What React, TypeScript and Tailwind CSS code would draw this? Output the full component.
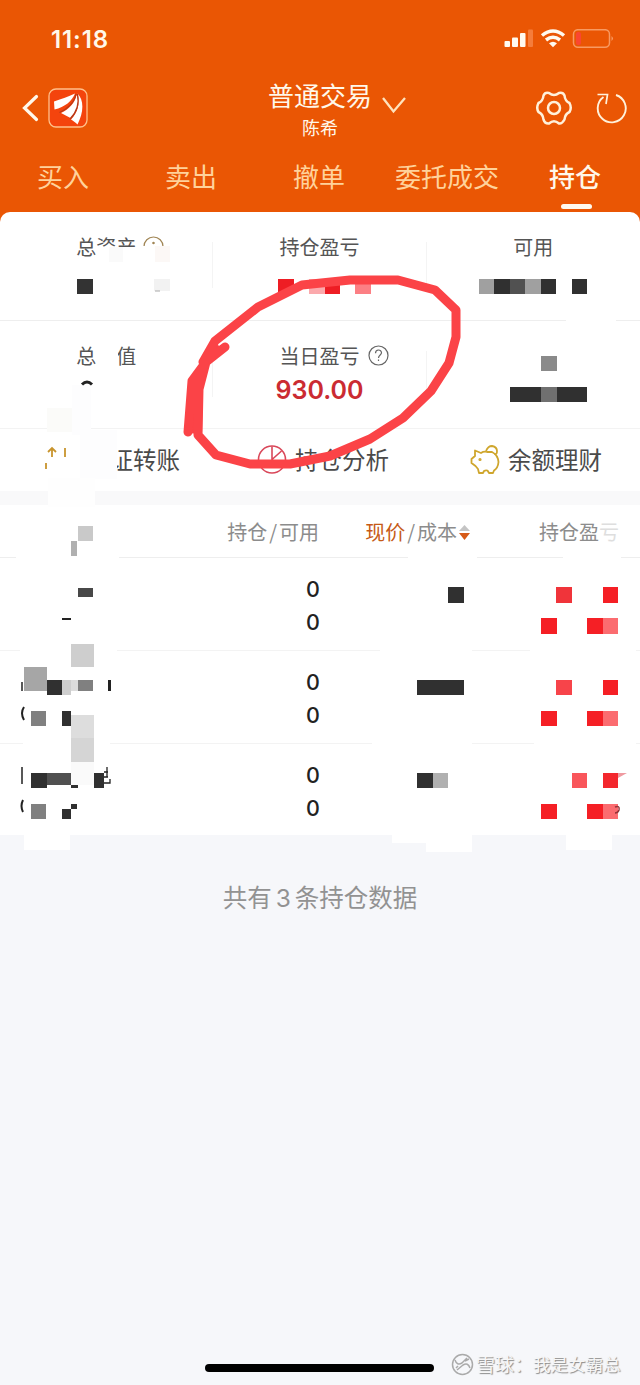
import clsx from 'clsx'

type Block = [number, number, number, number, string]

const tabs = ['买入', '卖出', '撤单', '委托成交', '持仓']

// x, y, width, height, colour
const masks: Block[] = [
  [97, 247, 45, 22, '#ffffff'],
  [142, 246, 28, 50, '#ffffff'],
  [96, 340, 22, 32, '#ffffff'],
  [47, 408, 25, 24, '#fbfbf9'],
  [72, 385, 19, 50, '#fdfdfe'],
  [80, 430, 37, 49, '#fdfdfe'],
  [48, 478, 47, 29, '#fefefe'],
  [566, 316, 50, 8, '#ffffff'],
  [16, 555, 103, 6, '#ffffff'],
  [20, 648, 97, 6, '#ffffff'],
  [23, 740, 87, 6, '#ffffff'],
  [408, 555, 69, 6, '#ffffff'],
  [380, 648, 92, 6, '#ffffff'],
  [372, 740, 100, 6, '#ffffff'],
  [563, 555, 58, 6, '#ffffff'],
  [530, 648, 106, 6, '#ffffff'],
  [534, 740, 102, 6, '#ffffff'],
  [24, 830, 46, 20, '#ffffff'],
  [392, 830, 34, 13, '#ffffff'],
  [426, 830, 46, 22, '#ffffff'],
  [566, 830, 46, 20, '#ffffff'],
]

const mosaic: Block[] = [
  [109, 247, 14, 15, '#fafafa'],
  [155, 246, 15, 16, '#fcf8f6'],
  [77, 279, 16, 15, '#333333'],
  [154, 279, 16, 12, '#f2f2f2'],
  [278, 279, 16, 15, '#ee1d24'],
  [309, 279, 16, 15, '#fba9ac'],
  [325, 279, 15, 15, '#ee1d24'],
  [355, 279, 16, 15, '#fc7f84'],
  [479, 279, 15, 15, '#a0a0a0'],
  [494, 279, 16, 15, '#303030'],
  [510, 279, 15, 15, '#515151'],
  [525, 279, 16, 15, '#a0a0a0'],
  [541, 279, 15, 15, '#303030'],
  [572, 279, 15, 15, '#303030'],
  [541, 356, 16, 15, '#8a8a8a'],
  [510, 387, 31, 15, '#303030'],
  [541, 387, 16, 15, '#707070'],
  [557, 387, 30, 15, '#303030'],
  // name column
  [78, 526, 15, 15, '#c9c9c9'],
  [71, 541, 6, 15, '#b0b0b0'],
  [78, 588, 15, 9, '#484848'],
  [62, 618, 9, 2, '#222222'],
  [71, 644, 23, 23, '#cecece'],
  [24, 667, 23, 24, '#a6a6a6'],
  [47, 680, 15, 15, '#303030'],
  [62, 680, 9, 15, '#cecece'],
  [71, 680, 7, 11, '#dcdcdc'],
  [78, 680, 15, 11, '#808080'],
  [108, 680, 3, 11, '#222222'],
  [31, 711, 15, 15, '#808080'],
  [62, 711, 9, 15, '#303030'],
  [71, 715, 23, 23, '#dddddd'],
  [71, 738, 23, 24, '#d5d5d5'],
  [31, 773, 16, 15, '#303030'],
  [47, 773, 24, 12, '#505050'],
  [71, 762, 23, 23, '#fafafa'],
  [71, 785, 7, 3, '#303030'],
  [94, 773, 10, 15, '#303030'],
  [31, 804, 15, 15, '#808080'],
  [62, 809, 9, 10, '#303030'],
  [71, 804, 6, 5, '#303030'],
  // price column
  [448, 587, 16, 16, '#303030'],
  [417, 680, 47, 15, '#303030'],
  [417, 773, 16, 15, '#303030'],
  [433, 773, 15, 15, '#b0b0b0'],
  // profit column
  [556, 587, 16, 16, '#f0343a'],
  [603, 587, 15, 16, '#f51f25'],
  [541, 618, 16, 16, '#f51f25'],
  [587, 618, 16, 16, '#f51f25'],
  [603, 618, 15, 16, '#fb6c70'],
  [556, 680, 16, 15, '#f7444a'],
  [603, 680, 15, 15, '#f51f25'],
  [541, 711, 16, 15, '#f51f25'],
  [587, 711, 16, 15, '#f51f25'],
  [603, 711, 15, 15, '#fb6c70'],
  [572, 773, 15, 15, '#f9565b'],
  [603, 773, 15, 15, '#f3272d'],
  [541, 804, 16, 15, '#f51f25'],
  [587, 804, 16, 15, '#f51f25'],
  [603, 804, 15, 15, '#fb6c70'],
]

function StatusBar() {
  return (
    <div className="flex h-[72px] items-center justify-between pl-[51px] pr-[26px] pt-[5px]">
      <span className="font-['Inter',sans-serif] text-[24px] font-semibold leading-none tracking-[0.900px] pt-[2px]">11:18</span>
      <svg width="110" height="20" viewBox="504 29 110 20" fill="#fffaf0">
        <rect x="504.500" y="41" width="5.500" height="6" rx="1" />
        <rect x="512" y="37.500" width="6" height="9.500" rx="1" />
        <rect x="520" y="33" width="5.500" height="14" rx="1" />
        <rect x="528" y="29.500" width="5" height="17.500" rx="1" fill="#f57c3b" />
        <g fill="none" stroke="#fffaf0" strokeWidth="3.500">
          <path d="M542 35.500Q553 26.500 564 35.500" />
          <path d="M546 40Q553 34.500 560 40" />
        </g>
        <path d="M549 43.300Q553 40.200 557 43.300L553 47.200Z" />
        <rect x="573.500" y="29.700" width="36" height="17.600" rx="4.500" fill="none" stroke="#f89a62" strokeWidth="1.500" />
        <rect x="576" y="32" width="5" height="13" rx="2" fill="#fa4631" />
        <path d="M611.500 36Q614.500 38.500 611.500 41Z" fill="#f89a62" />
      </svg>
    </div>
  )
}

function TitleBar() {
  return (
    <div className="grid h-[72px] grid-cols-3">
      <div className="flex items-center pl-[20px]">
        <svg width="70" height="42" viewBox="20 87 70 42" fill="none">
          <path d="M36.500 96.500L24.500 108L36.500 119.500" stroke="#fff8ea" strokeWidth="3.200" strokeLinecap="round" />
          <rect x="49" y="89" width="38" height="38" rx="7" fill="#f4440d" stroke="#ffc08a" strokeWidth="1.300" />
          <g fill="#fff">
            <path d="M54 101.500C62 99 68 96.500 75 93.500C72 101 65 107 54.500 109.500Z" />
            <path d="M61 113C69 109 75 103 76.500 95C80 103 77 111 70.500 118Z" />
            <path d="M77.500 93.500C84 100 84 112 77.500 124.500C75.500 122 73 121 71 119.500C78 112 80 104 77.500 93.500Z" />
          </g>
          <path d="M59.500 112.500C68 109 74.500 102 76 94M70 119C77 112 79.500 104 77.500 94" stroke="#b5391a" strokeWidth="1.200" />
        </svg>
      </div>
      <div className="flex flex-col items-center">
        <div className="relative mt-[8px] text-[26px] leading-[30px]">
          普通交易
          <svg className="absolute left-[113px] top-[16px]" width="26" height="18" viewBox="0 0 26 18" fill="none" stroke="#ffe3bd" strokeWidth="2.300">
            <path d="M2 2L12.500 15.500L24 2" />
          </svg>
        </div>
        <div className="mt-[5px] text-[18px] leading-[24px]">陈希</div>
      </div>
      <div className="flex items-center justify-end pr-[12px]">
        <svg width="92" height="38" viewBox="536 89 92 38" fill="none" stroke="#fff1db" strokeWidth="2.500">
          <path d="M549 93Q554 97 559 93Q563 92 564.500 95.500Q565 101 569.500 103Q572 108 569.500 112Q565 114 564.500 119.500Q562 124 559 123.500Q554 119 549 123.500Q545 124 543.500 119.500Q543 114 538.500 112Q536 108 538.500 103Q543 101 543.500 95.500Q545 92 549 93Z" strokeLinejoin="round" />
          <circle cx="554" cy="108" r="6" />
          <path d="M603.500 97A14 14 0 1 0 616 95" strokeWidth="1.900" />
          <path d="M597.500 94.500H607.500L606 104" strokeWidth="1.700" />
        </svg>
      </div>
    </div>
  )
}

function Header() {
  return (
    <header className="h-[212px] text-[#fff8ea]">
      <StatusBar />
      <TitleBar />
      <nav className="grid grid-cols-5 pt-[14px]">
        {tabs.map((tab, i) => (
          <div key={tab} className="flex flex-col items-center">
            <span
              className={clsx(
                'relative -left-px whitespace-nowrap text-[26px] leading-[36px]',
                i === 4 ? 'font-medium text-[#fff8ea]' : 'font-normal text-[#ffd29b]',
              )}
            >
              {tab}
            </span>
            {i === 4 && <span className="mt-[10px] h-[5px] w-[31px] rounded-sm bg-[#fffaf0]" />}
          </div>
        ))}
      </nav>
    </header>
  )
}

function Help({ hint }: { hint?: boolean }) {
  return (
    <svg
      className={clsx('absolute top-[4px]', hint ? 'left-[67px]' : 'left-[89px]')}
      width="21"
      height="21"
      viewBox="0 0 21 21"
      fill="none"
      stroke={hint ? '#a08554' : '#666'}
      strokeWidth="1.200"
    >
      <circle cx="10.500" cy="10.500" r="9.500" />
      {hint ? (
        <circle cx="10.500" cy="7" r="0.700" />
      ) : (
        <path d="M7.500 8.200C7.500 4 13.500 4 13.500 7.800C13.500 10 10.500 10 10.500 13M10.500 14.500V16" />
      )}
    </svg>
  )
}

interface CellProps {
  label?: string
  value?: string
  help?: boolean
  hint?: boolean
  last?: boolean
}

function Cell({ label, value, help, hint, last }: CellProps) {
  return (
    <div className="flex h-full flex-1 items-start">
      <div className="flex flex-1 flex-col items-center pt-[20px]">
        <div className="relative h-[30px] text-[20px] leading-[30px] text-[#555]">
          {label}
          {(help || hint) && <Help hint={hint} />}
        </div>
        {value && (
          <span className="mt-[5px] font-['Inter',sans-serif] text-[25px] font-semibold leading-[28px] text-[#cb2b32]">
            {value}
          </span>
        )}
      </div>
      {!last && <span className="mt-[30px] h-[46px] w-px bg-[#f4f4f4]" />}
    </div>
  )
}

function Summary() {
  return (
    <section className="overflow-hidden rounded-t-[10px] bg-white">
      <div className="flex h-[109px] border-b border-[#eeeeee]">
        <Cell label="总资产" hint />
        <Cell label="持仓盈亏" />
        <Cell label="可用" last />
      </div>
      <div className="flex h-[108px] border-b border-[#f3f3f3]">
        <Cell label="总市值" />
        <Cell label="当日盈亏" value="930.00" help />
        <Cell last />
      </div>
      <div className="flex h-[62px] items-center text-[23.500px] text-[#4a4a4a]">
        <div className="flex flex-1 items-center pl-[44px]">
          <svg width="24" height="30" viewBox="0 0 24 30" fill="none" stroke="#c8942d" strokeWidth="1.800">
            <path d="M8 12V3M4 7L8 3L12 7M21 3V12M2 18V24" />
          </svg>
          <span className="ml-[18px] whitespace-nowrap">银证转账</span>
        </div>
        <div className="flex flex-1 items-center pl-[43px]">
          <svg width="30" height="30" viewBox="0 0 30 30" fill="none" stroke="#d9485a" strokeWidth="1.600">
            <circle cx="15" cy="14.500" r="13.500" />
            <path d="M15 1.500V14.500L24.500 6M15 14.500L25 23" />
          </svg>
          <span className="ml-[8px] whitespace-nowrap">持仓分析</span>
        </div>
        <div className="flex flex-1 items-center pl-[43px]">
          <svg width="30" height="30" viewBox="0 0 30 30" fill="none" stroke="#cfa62d" strokeWidth="1.800" strokeLinejoin="round">
            <path d="M5 5.500L11 8Q14 6 17 7H22Q28 10 28.500 17Q28 23 24 25.500L23 28H19L17.500 25.500Q15.500 25 14 26L13 28H9L8 24L5.500 21L1.500 18V14L5 11Z" />
            <path d="M16 6Q18 1 22 1Q27 2 27 6Q27 10 24.500 9" />
            <circle cx="10" cy="14.500" r="0.700" />
          </svg>
          <span className="ml-[8px] whitespace-nowrap">余额理财</span>
        </div>
      </div>
    </section>
  )
}

function Holdings() {
  return (
    <section className="border-t-[14px] border-[#f9f9fa] bg-white">
      <div className="flex h-[53px] items-center border-b border-[#eeeeee] pt-[2px] text-[20px] text-[#8c8c8c]">
        <span className="w-[319px] text-right">
          持仓<span className="px-[2px]">/</span>可用
        </span>
        <span className="flex w-[152px] items-center justify-end">
          <span className="text-[#c65a16]">现价</span>
          <span className="px-[2px]">/</span>成本
          <svg className="ml-px" width="13" height="18" viewBox="0 0 13 18">
            <path d="M1 8L6.500 2L12 8Z" fill="#c4c4c4" />
            <path d="M1 10H12L6.500 17Z" fill="#d65a17" />
          </svg>
        </span>
        <span className="flex w-[148px] justify-end">
          持仓盈<span className="text-[#dedede]">亏</span>
        </span>
      </div>
      {[0, 1, 2].map((row) => (
        <div
          key={row}
          className={clsx(
            "flex flex-col pl-[306px] pt-[15px] font-['Inter',sans-serif] text-[21.500px] font-medium leading-[32.500px] text-[#222]",
            row < 2 ? 'h-[93px] border-b border-[#f3f3f3]' : 'h-[91px]',
          )}
        >
          <span>0</span>
          <span>0</span>
        </div>
      ))}
    </section>
  )
}

function Blocks({ items }: { items: Block[] }) {
  return (
    <>
      {items.map(([x, y, w, h, fill], i) => (
        <rect key={i} x={x} y={y} width={w} height={h} fill={fill} />
      ))}
    </>
  )
}

// Mosaic over the private figures, with the hand-drawn ring on top
function Markup() {
  return (
    <svg className="pointer-events-none absolute left-0 top-0" width="640" height="1385" viewBox="0 0 640 1385" fill="none">
      <Blocks items={masks} />
      <Blocks items={mosaic} />
      <g stroke="#222" strokeWidth="2">
        <path d="M82 384.500Q87 379.500 92 384.500" strokeWidth="3" />
        <path d="M22 682V691M22 767V784" strokeWidth="1.500" />
        <path d="M24 707Q20 713 24 720M23 800Q20 806 23 812" />
        <path d="M107 767V777M104 772H108M104 777H108M104 783H110V779" strokeWidth="1.300" />
      </g>
      <path d="M155 291H160" stroke="#aaa" />
      <path d="M618 773H627L618 778Z" fill="#ef9aa0" />
      <path d="M615 807Q620 805 619 810Q618 813 615 813" stroke="#963338" strokeWidth="1.500" />
      <path d="M212 343L228 349L207 366L203 385L202 434L186 433L190 380Z" fill="#fb4347" />
      <path
        d="M225 347L206 362L192 381L188 432M206 362L199 389L198 435L216 455L250 464L290 464L330 456L370 439L403 418L431 391L449 363L456 337L456 310L435 290L398 280L350 280L302 285L258 307L215 341L203 362"
        stroke="#fb4347"
        strokeWidth="9"
        strokeLinecap="round"
        strokeLinejoin="round"
      />
    </svg>
  )
}

export default function App() {
  return (
    <div className="relative flex h-[1385px] w-[640px] flex-col overflow-hidden bg-[#f6f7fa] font-['Noto_Sans_CJK_SC',sans-serif]">
      <div className="bg-[#ea5604]">
        <Header />
        <Summary />
      </div>
      <Holdings />
      <p className="mt-[44px] text-center text-[24.500px] leading-[36px] text-[#929292]">
        共有<span className="px-[4px] font-['Inter',sans-serif]">3</span>条持仓数据
      </p>
      <footer className="mt-auto flex h-[42px] items-center pl-[205px]">
        <span className="mt-[8px] h-[8px] w-[229px] rounded-full bg-black" />
        <span className="ml-[17px] flex items-center text-[17.500px] text-[#f7f7f7] [text-shadow:1px_1px_1px_#888]">
          <svg width="23" height="23" viewBox="0 0 23 23" fill="none" stroke="#aaa" strokeWidth="1.500">
            <circle cx="11.500" cy="11.500" r="10" />
            <path d="M4 7Q6 13 11 10L16 5M6 17L12 12Q17 9 19 15M14 8L18 6M7 13L5 15" />
          </svg>
          <span className="ml-[2px] whitespace-nowrap text-[19px]">雪球：</span>
          <span className="whitespace-nowrap">我是女霸总</span>
        </span>
      </footer>
      <Markup />
    </div>
  )
}
